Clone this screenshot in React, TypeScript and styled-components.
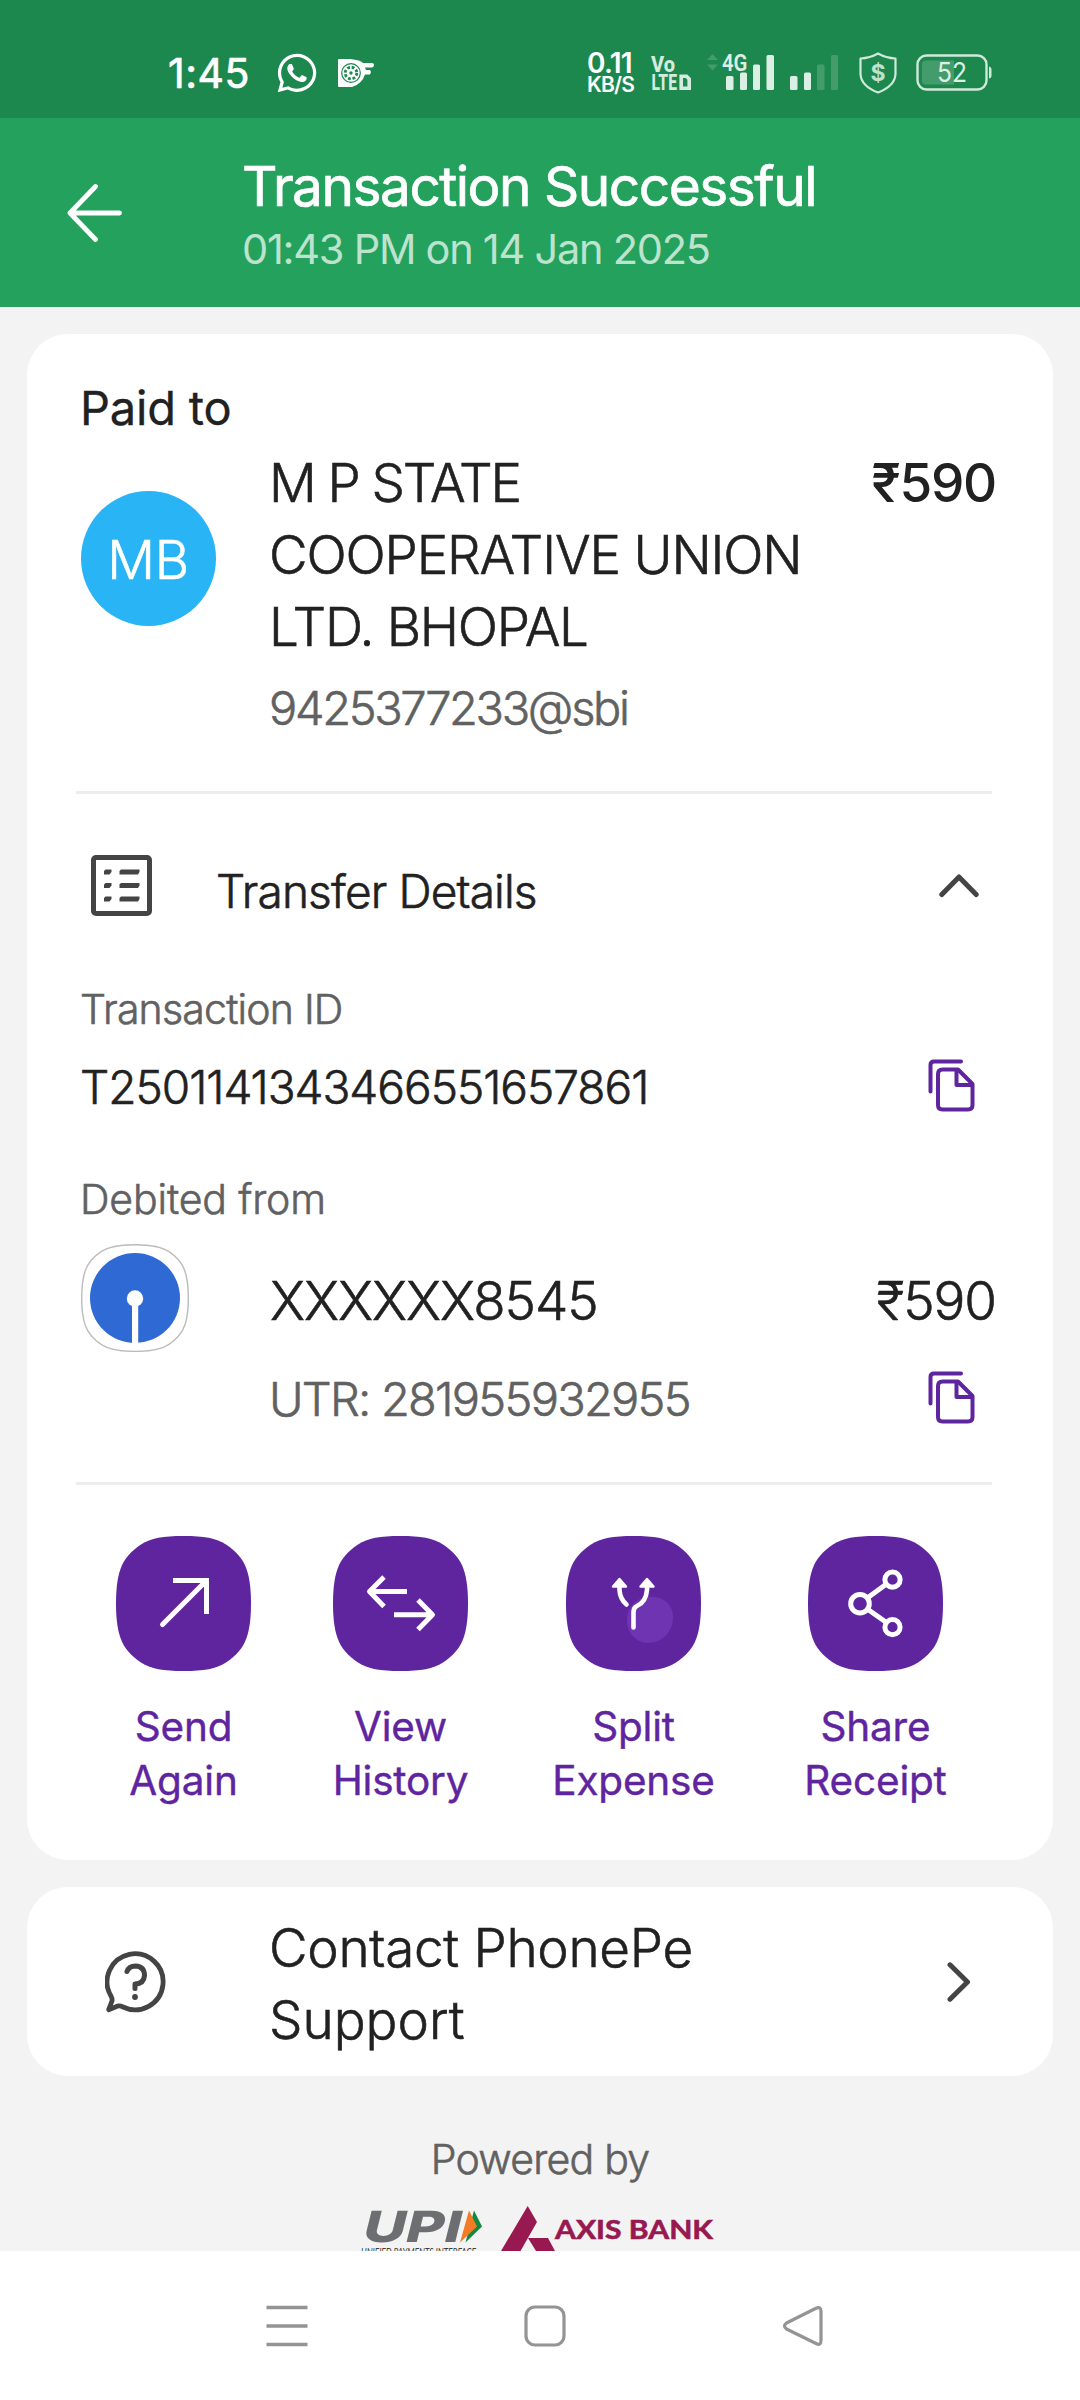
import React from "react";
import styled, { createGlobalStyle } from "styled-components";
import { FaWhatsapp } from "react-icons/fa";

const INK = "#212121";
const MUTED = "#616161";
const PURPLE = "#5f259f";
const DARK = "#444444";

const GlobalStyle = createGlobalStyle`
  * { box-sizing: border-box; }
  body { margin: 0; background: #f3f3f3; }
  svg { display: block; flex: none; }
`;

const Screen = styled.div`
  width: 1080px;
  height: 2400px;
  display: flex;
  flex-direction: column;
  overflow: hidden;
  background: #f3f3f3;
  color: ${INK};
  font-family: Inter, Roboto, "Liberation Sans", sans-serif;
`;

interface TextProps {
  $size: number;
  $line: number;
  $track?: number;
  $weight?: number;
  $stroke?: number;
  $color?: string;
}

/* A hairline stroke on the light cut gives a weight between light and regular. */
const Text = styled.span<TextProps>`
  display: block;
  white-space: nowrap;
  font-size: ${(p) => p.$size}px;
  line-height: ${(p) => p.$line}px;
  letter-spacing: ${(p) => p.$track ?? 0}px;
  font-weight: ${(p) => p.$weight ?? 300};
  -webkit-text-stroke: ${(p) => p.$stroke ?? (p.$weight ? 0 : 0.6)}px currentColor;
  color: ${(p) => p.$color ?? "inherit"};
`;

/* Status bar */
const StatusBar = styled.div`
  height: 118px;
  flex: none;
  padding: 27px 88px 0 168px;
  display: flex;
  align-items: center;
  justify-content: space-between;
  background: #1d884e;
  color: #ffffff;
`;

const StatusLeft = styled.div`
  display: flex;
  align-items: center;
`;

const Clock = styled(Text)`
  width: 109px;
`;

const StatusRight = styled.div`
  display: flex;
  align-items: center;
  color: #dcefe4;
`;

const NetSpeed = styled.div`
  width: 63px;
  padding-top: 3px;
  color: #ffffff;
`;

const Gap = styled.div<{ $w: number }>`
  width: ${(p) => p.$w}px;
  flex: none;
`;

const WhatsappIcon = styled(FaWhatsapp)`
  width: 44px;
  height: 44px;
  margin: 0 18px 0 -2px;
`;

/* App header */
const Header = styled.header`
  height: 189px;
  flex: none;
  display: flex;
  align-items: center;
  padding-left: 67px;
  background: #24a25d;
  color: #ffffff;
`;

const HeaderTitles = styled.div`
  padding: 5px 0 0 119px;
`;

/* Cards */
const Card = styled.section`
  margin: 27px 27px 0;
  padding: 49px 57px 0 54px;
  height: 1526px;
  flex: none;
  border-radius: 41px;
  background: #ffffff;
`;

const PaidTo = styled(Text)`
  margin-left: -1px;
`;

const PayeeRow = styled.div`
  display: flex;
  margin-top: 15px;
`;

const Avatar = styled.div`
  width: 135px;
  height: 135px;
  margin: 44px 53px 0 0;
  padding: 3px 1px 0 0;
  border-radius: 50%;
  background: #29b4f6;
  color: #ffffff;
  display: flex;
  align-items: center;
  justify-content: center;
`;

const Column = styled.div`
  flex: 1;
  min-width: 0;
`;

const PayeeId = styled(Text)`
  margin-top: 17px;
`;

const Divider = styled.div<{ $top: number }>`
  height: 3px;
  margin: ${(p) => p.$top}px 4px 0 -5px;
  background: #eceeee;
`;

const DetailsHeader = styled.div`
  height: 183px;
  display: flex;
  align-items: center;
  padding: 0 17px 0 10px;
`;

const DetailsTitle = styled(Text)`
  flex: 1;
  padding: 11px 0 0 64px;
`;

const Label = styled(Text)<{ $top: number }>`
  margin: ${(p) => p.$top}px 0 0 -1px;
`;

const CopyRow = styled.div<{ $top: number }>`
  height: 60px;
  margin-top: ${(p) => p.$top}px;
  display: flex;
  align-items: center;
  justify-content: space-between;
  padding-right: 21px;
`;

const TransactionId = styled(Text)`
  padding-top: 3px;
  margin-left: -1px;
`;

const Utr = styled(Text)`
  padding-top: 3px;
  margin-left: -1px;
`;

const BankRow = styled.div`
  display: flex;
  margin-top: 20px;
`;

const BankBody = styled(Column)`
  padding: 27px 0 0 81px;
`;

const Between = styled.div`
  display: flex;
  justify-content: space-between;
`;

const Actions = styled.div`
  display: grid;
  grid-template-columns: 217px 217px 249px 235px;
  margin: 51px 0 0 -6px;
`;

const Action = styled.button`
  all: unset;
  display: flex;
  flex-direction: column;
  align-items: center;
  color: ${PURPLE};
`;

const ActionLabels = styled.div`
  margin-top: 29px;
  text-align: center;
`;

const SupportCard = styled.section`
  margin: 27px 27px 0;
  height: 189px;
  flex: none;
  padding: 0 82px 0 78px;
  display: flex;
  align-items: center;
  border-radius: 41px;
  background: #ffffff;
`;

const SupportText = styled(Column)`
  padding: 5px 0 0 103px;
`;

/* Footer */
const Footer = styled.footer`
  height: 175px;
  flex: none;
  padding-top: 58px;
  display: flex;
  flex-direction: column;
  align-items: center;
  overflow: hidden;
`;

const Logos = styled.div`
  display: flex;
  margin-top: 22px;
  padding-right: 10px;
`;

const NavBar = styled.nav`
  flex: 1;
  display: flex;
  align-items: center;
  gap: 216px;
  padding-left: 266px;
  background: #ffffff;
`;

const TILE =
  "M67.5 0 C88 0 100 2 110 8.500 C120 15 127 23 130.500 33 C134 43 135 55 135 67.500 C135 80 134 92 130.500 102 C127 112 120 120 110 126.500 C100 133 88 135 67.500 135 C47 135 35 133 25 126.500 C15 120 8 112 4.500 102 C1 92 0 80 0 67.500 C0 55 1 43 4.500 33 C8 23 15 15 25 8.500 C35 2 47 0 67.500 0 Z";

const CameraIcon = () => (
  <svg width="38" height="30" viewBox="0 0 38 30">
    <path d="M2 1 H13 Q24 2 26 5 H35 Q37 5 37 7 Q37 9 35 9.500 H28 L29 12 H33 L34 14 L33 16.500 H28 Q25 26 15 29 H2 Q1 29 1 28 V2 Q1 1 2 1Z" fill="#fff" />
    <circle cx="14" cy="15" r="9.300" fill="none" stroke="#1d884e" strokeWidth="1.200" />
    <circle cx="14" cy="15" r="5.800" fill="none" stroke="#1d884e" strokeWidth="2.800" strokeDasharray="2.800 1.755" />
    <circle cx="14" cy="15" r="1.700" fill="#1d884e" />
  </svg>
);

const VoLteIcon = () => (
  <svg width="42" height="44" viewBox="650 50 42 44" fill="#d4ecdf" fontFamily="Roboto, sans-serif" fontWeight="800">
    <text x="651" y="70.500" fontSize="21.500" textLength="24" lengthAdjust="spacingAndGlyphs">Vo</text>
    <text x="651.500" y="89" fontSize="21.500" textLength="25.500" lengthAdjust="spacingAndGlyphs">LTE</text>
    <path d="M681.200 75.200 H686.500 L689.200 78 V87.200 H681.200Z" fill="none" stroke="#d4ecdf" strokeWidth="3.600" />
  </svg>
);

const SignalIcon = () => (
  <svg width="132" height="44" viewBox="707 50 132 44">
    <g fill="#449b6c">
      <path d="M707 59 L712.500 53 L718 59Z M707 63.500 H718 L712.500 69.500Z" />
      <rect x="817" y="63.500" width="7.500" height="25.500" rx="1.500" />
      <rect x="831" y="54" width="7" height="35" rx="1.500" />
    </g>
    <g fill="#dcefe4">
      <rect x="726" y="75" width="7.500" height="14" rx="1.500" />
      <rect x="740" y="71.500" width="7" height="17.500" rx="1.500" />
      <rect x="753" y="63.500" width="7" height="25.500" rx="1.500" />
      <rect x="766.500" y="54" width="7.500" height="35" rx="1.500" />
      <rect x="790" y="75" width="7.500" height="14" rx="1.500" />
      <rect x="804" y="71.500" width="7" height="17.500" rx="1.500" />
      <text x="722" y="69.500" fontFamily="Roboto, sans-serif" fontWeight="600" fontSize="24" textLength="25.500" lengthAdjust="spacingAndGlyphs">4G</text>
    </g>
  </svg>
);

const ShieldIcon = () => (
  <svg width="38" height="42" viewBox="0 0 38 42">
    <path d="M19 1.500 Q27 6 36.500 6.500 V22 Q36 34 19 40.500 Q2 34 1.500 22 V6.500 Q11 6 19 1.500Z" fill="none" stroke="#cfe9da" strokeWidth="2.200" strokeLinejoin="round" />
    <text x="19" y="29" textAnchor="middle" fontFamily="Inter, sans-serif" fontWeight="700" fontSize="23" fill="#bfe1cd">$</text>
  </svg>
);

const BatteryIcon = () => (
  <svg width="76" height="37" viewBox="0 0 76 37">
    <rect x="1.500" y="1.500" width="69" height="34" rx="9" fill="none" stroke="#cfe9da" strokeWidth="2.400" />
    <path d="M73 12.500 Q75.500 13 75.500 15 V22 Q75.500 24 73 24.500Z" fill="#cfe9da" />
    <path d="M10 6.500 H38 V30.500 H10 Q6 30.500 6 26.500 V10.500 Q6 6.500 10 6.500Z" fill="#449b6c" />
    <text x="21" y="28.300" fontFamily="Inter, sans-serif" fontWeight="400" fontSize="27.500" textLength="30" lengthAdjust="spacingAndGlyphs" fill="#dcefe4">52</text>
  </svg>
);

const BackArrow = () => (
  <svg width="56" height="60" viewBox="0 0 56 60">
    <path d="M28.500 3.500 L3 30 L28.500 56.500 M3 30 H52.500" fill="none" stroke="#fff" strokeWidth="4.800" strokeLinecap="round" strokeLinejoin="round" />
  </svg>
);

const ListIcon = () => (
  <svg width="61" height="61" viewBox="0 0 61 61">
    <rect x="2.500" y="2.500" width="56" height="56" rx="2.500" fill="none" stroke={DARK} strokeWidth="5" />
    {[17, 30.5, 44].map((y) => (
      <g key={y} fill={DARK}>
        <path d={`M14.500 ${y - 2.5} H20.500 V${y} L18.500 ${y + 2.5} H13 V${y - 1}Z`} />
        <path d={`M30 ${y - 2.5} H48.500 V${y} L47 ${y + 2.5} H28.500 V${y - 1}Z`} />
      </g>
    ))}
  </svg>
);

const ChevronUp = () => (
  <svg width="40" height="24" viewBox="0 0 40 24">
    <path d="M2.800 20.500 L20 3 L37.200 20.500" fill="none" stroke={DARK} strokeWidth="5" strokeLinecap="round" strokeLinejoin="round" />
  </svg>
);

const ChevronRight = () => (
  <svg width="24" height="40" viewBox="0 0 24 40">
    <path d="M3 2.800 L20.500 20 L3 37.200" fill="none" stroke={DARK} strokeWidth="5" strokeLinecap="round" strokeLinejoin="round" />
  </svg>
);

const CopyIcon = () => (
  <svg width="47" height="53" viewBox="0 0 47 53" fill="none" stroke={PURPLE} strokeWidth="4" strokeLinejoin="round">
    <path d="M2.500 32.500 V6 Q2.500 2.500 6 2.500 H33" strokeLinecap="round" />
    <path d="M14.500 10.500 H30 L44.500 25 V46 Q44.500 50.500 40 50.500 H14.500 Q10 50.500 10 46 V15 Q10 10.500 14.500 10.500Z" />
    <path d="M28.500 10.500 V26 H44.500" />
  </svg>
);

const SbiLogo = () => (
  <svg width="108" height="108" viewBox="0 0 108 108">
    <path transform="translate(.7 .7) scale(.79)" d={TILE} fill="#fff" stroke="#bdbdbd" strokeWidth="1.800" />
    <circle cx="54" cy="54" r="45" fill="#2f69d4" />
    <circle cx="54" cy="54.500" r="8.200" fill="#fff" />
    <rect x="51" y="58" width="6.200" height="42" fill="#fff" />
  </svg>
);

const Tile = ({ children }: { children: React.ReactNode }) => (
  <svg width="135" height="135" viewBox="0 0 135 135">
    <path d={TILE} fill={PURPLE} />
    <g fill="none" stroke="#fff" strokeWidth="5">{children}</g>
  </svg>
);

const ACTIONS = [
  {
    words: ["Send", "Again"],
    glyph: (
      <>
        <path d="M46.500 88.500 L89 46" strokeLinecap="round" />
        <path d="M57 44.500 H90.500 V78" />
      </>
    ),
  },
  {
    words: ["View", "History"],
    glyph: (
      <path d="M74 55.500 H36.500 M51 41 L36.500 55.500 L51 70.500 M61 78.700 H99 M85 64 L99.500 78.700 L85 93.500" strokeLinejoin="round" />
    ),
  },
  {
    words: ["Split", "Expense"],
    glyph: (
      <>
        <path d="M86 60.700 C98 61 107 69 107 81 C107 96 96 107 81 107 C69 106 61 96 61 84 C61 70 71 60.700 86 60.700Z" fill="#6f34b1" stroke="none" />
        <path d="M53.500 48 V54 Q54 63 60.500 68.500 M81 48 V54 Q80 66 71 70 Q67.500 71.500 67.500 76 V91.500" strokeLinecap="round" strokeWidth="4.600" />
        <path d="M53.500 43 L60 50.500 H47Z M81 43 L87.500 50.500 H74.500Z" fill="#fff" strokeWidth="2.400" strokeLinejoin="round" />
      </>
    ),
  },
  {
    words: ["Share", "Receipt"],
    glyph: (
      <>
        <circle cx="52" cy="67.700" r="9.300" />
        <circle cx="84.500" cy="43.700" r="7.600" />
        <circle cx="84.500" cy="91.200" r="7.600" />
        <path d="M60 61.500 L78.500 48 M60 73.500 L78.500 86.500" />
      </>
    ),
  },
];

const HelpIcon = () => (
  <svg width="61" height="62" viewBox="0 0 61 62">
    <path d="M3.700 58.700 L7 50 Q7.500 48 6 45 A28 28 0 1 1 18 56 Q14 54 11 55.800 Z" fill="none" stroke={DARK} strokeWidth="4.800" strokeLinejoin="round" />
    <path d="M22 20.500 Q24 15 30.500 15 Q39.500 15.500 39.500 24.500 Q39 32.500 30 33 V37.500" fill="none" stroke={DARK} strokeWidth="5" strokeLinecap="round" strokeLinejoin="round" />
    <circle cx="30" cy="46" r="2.900" fill={DARK} />
  </svg>
);

const UpiLogo = () => (
  <svg width="126" height="45" viewBox="357 2206 126 45">
    <text transform="translate(360.500 2242) skewX(-14)" fontFamily="Inter, sans-serif" fontWeight="800" fontSize="43" textLength="98" lengthAdjust="spacingAndGlyphs" fill="#6d6e71">UPI</text>
    <path d="M474 2210.500 L482 2226.500 L465.500 2242.500Z" fill="#0e8a43" />
    <path d="M469 2210.500 L477 2226.500 L460 2242.500Z" fill="#f47b25" />
    <text x="361" y="2255.500" fontFamily="Lato, sans-serif" fontStyle="italic" fontSize="12" textLength="115" lengthAdjust="spacingAndGlyphs" fill="#3a3a3a">UNIFIED PAYMENTS INTERFACE</text>
  </svg>
);

const AxisLogo = () => (
  <svg width="213" height="45" viewBox="501 2206 213 45" fill="#97194f">
    <path d="M527.700 2206 L537 2222 L520.500 2251 H501Z M528 2238 H548 L555 2251 H536Z" />
    <text x="555" y="2238.500" fontFamily="Lato, sans-serif" fontWeight="700" fontSize="26" textLength="158" lengthAdjust="spacingAndGlyphs" stroke="#97194f" strokeWidth="0.600">AXIS BANK</text>
  </svg>
);

const App = () => (
  <Screen>
    <GlobalStyle />
    <StatusBar>
      <StatusLeft>
        <Clock $size={41} $line={50} $weight={400} $stroke={0.7} $track={0.5}>1:45</Clock>
        <WhatsappIcon />
        <CameraIcon />
      </StatusLeft>
      <StatusRight>
        <NetSpeed>
          <Text $size={28} $line={22} $weight={600} $track={-0.7}>0.11</Text>
          <Text $size={21} $line={22} $weight={600} $track={-0.8}>KB/S</Text>
        </NetSpeed>
        <VoLteIcon />
        <Gap $w={15} />
        <SignalIcon />
        <Gap $w={20} />
        <ShieldIcon />
        <Gap $w={19} />
        <BatteryIcon />
      </StatusRight>
    </StatusBar>

    <Header>
      <BackArrow />
      <HeaderTitles>
        <Text $size={55} $line={68} $weight={400} $stroke={0.7} $track={-1.5}>Transaction Successful</Text>
        <Text $size={41.5} $line={58} $weight={400} $track={-1.25} $color="#bde3ce">01:43 PM on 14 Jan 2025</Text>
      </HeaderTitles>
    </Header>

    <Card>
      <PaidTo $size={47} $line={49} $weight={400} $stroke={0.3} $track={-0.2}>Paid to</PaidTo>
      <PayeeRow>
        <Avatar>
          <Text $size={53} $line={72} $track={-0.4}>MB</Text>
        </Avatar>
        <Column>
          <Between>
            <Text $size={53} $line={72} $track={-2.1}>M P STATE</Text>
            <Text $size={53} $line={72} $weight={500} $track={-1.3}>₹590</Text>
          </Between>
          <Text $size={53} $line={72} $track={-1.15}>COOPERATIVE UNION</Text>
          <Text $size={53} $line={72} $track={-1.3}>LTD. BHOPAL</Text>
          <PayeeId $size={47} $line={56} $track={-2.35} $color={MUTED}>9425377233@sbi</PayeeId>
        </Column>
      </PayeeRow>
      <Divider $top={55} />
      <DetailsHeader>
        <ListIcon />
        <DetailsTitle $size={46} $line={56} $track={-0.85}>Transfer Details</DetailsTitle>
        <ChevronUp />
      </DetailsHeader>
      <Label $top={7} $size={41} $line={50} $track={-0.8} $color={MUTED}>Transaction ID</Label>
      <CopyRow $top={21}>
        <TransactionId $size={46} $line={60} $track={-1}>T2501141343466551657861</TransactionId>
        <CopyIcon />
      </CopyRow>
      <Label $top={59} $size={41} $line={50} $track={-0.15} $color={MUTED}>Debited from</Label>
      <BankRow>
        <SbiLogo />
        <BankBody>
          <Between>
            <Text $size={53} $line={60} $track={-1.05}>XXXXXX8545</Text>
            <Text $size={53} $line={60} $track={-1.1}>₹590</Text>
          </Between>
          <CopyRow $top={36}>
            <Utr $size={47} $line={60} $track={-1.75} $color={MUTED}>UTR: 281955932955</Utr>
            <CopyIcon />
          </CopyRow>
        </BankBody>
      </BankRow>
      <Divider $top={55} />
      <Actions>
        {ACTIONS.map(({ words, glyph }) => (
          <Action key={words[0]}>
            <Tile>{glyph}</Tile>
            <ActionLabels>
              {words.map((word) => (
                <Text key={word} $size={40.5} $line={54} $weight={400} $stroke={0.4} $track={-0.2}>{word}</Text>
              ))}
            </ActionLabels>
          </Action>
        ))}
      </Actions>
    </Card>

    <SupportCard>
      <HelpIcon />
      <SupportText>
        <Text $size={53} $line={72} $track={-0.3}>Contact PhonePe</Text>
        <Text $size={53} $line={72} $track={0}>Support</Text>
      </SupportText>
      <ChevronRight />
    </SupportCard>

    <Footer>
      <Text $size={41} $line={50} $track={-0.75} $color={MUTED}>Powered by</Text>
      <Logos>
        <UpiLogo />
        <Gap $w={18} />
        <AxisLogo />
      </Logos>
    </Footer>

    <NavBar>
      <svg width="42" height="42" viewBox="0 0 42 42">
        <path d="M0.500 2.500 H41.500 M0.500 21 H41.500 M0.500 39.500 H41.500" stroke="#949494" strokeWidth="3.400" />
      </svg>
      <svg width="42" height="42" viewBox="0 0 42 42">
        <rect x="2" y="2" width="38" height="38" rx="9" fill="none" stroke="#949494" strokeWidth="3.200" />
      </svg>
      <svg width="42" height="42" viewBox="0 0 42 42">
        <path d="M34 3.200 Q39 1 39 6.500 V35.500 Q39 41 34 38.500 L4.500 24 Q0.500 21 4.500 18Z" fill="none" stroke="#949494" strokeWidth="3.200" strokeLinejoin="round" />
      </svg>
    </NavBar>
  </Screen>
);

export default App;
